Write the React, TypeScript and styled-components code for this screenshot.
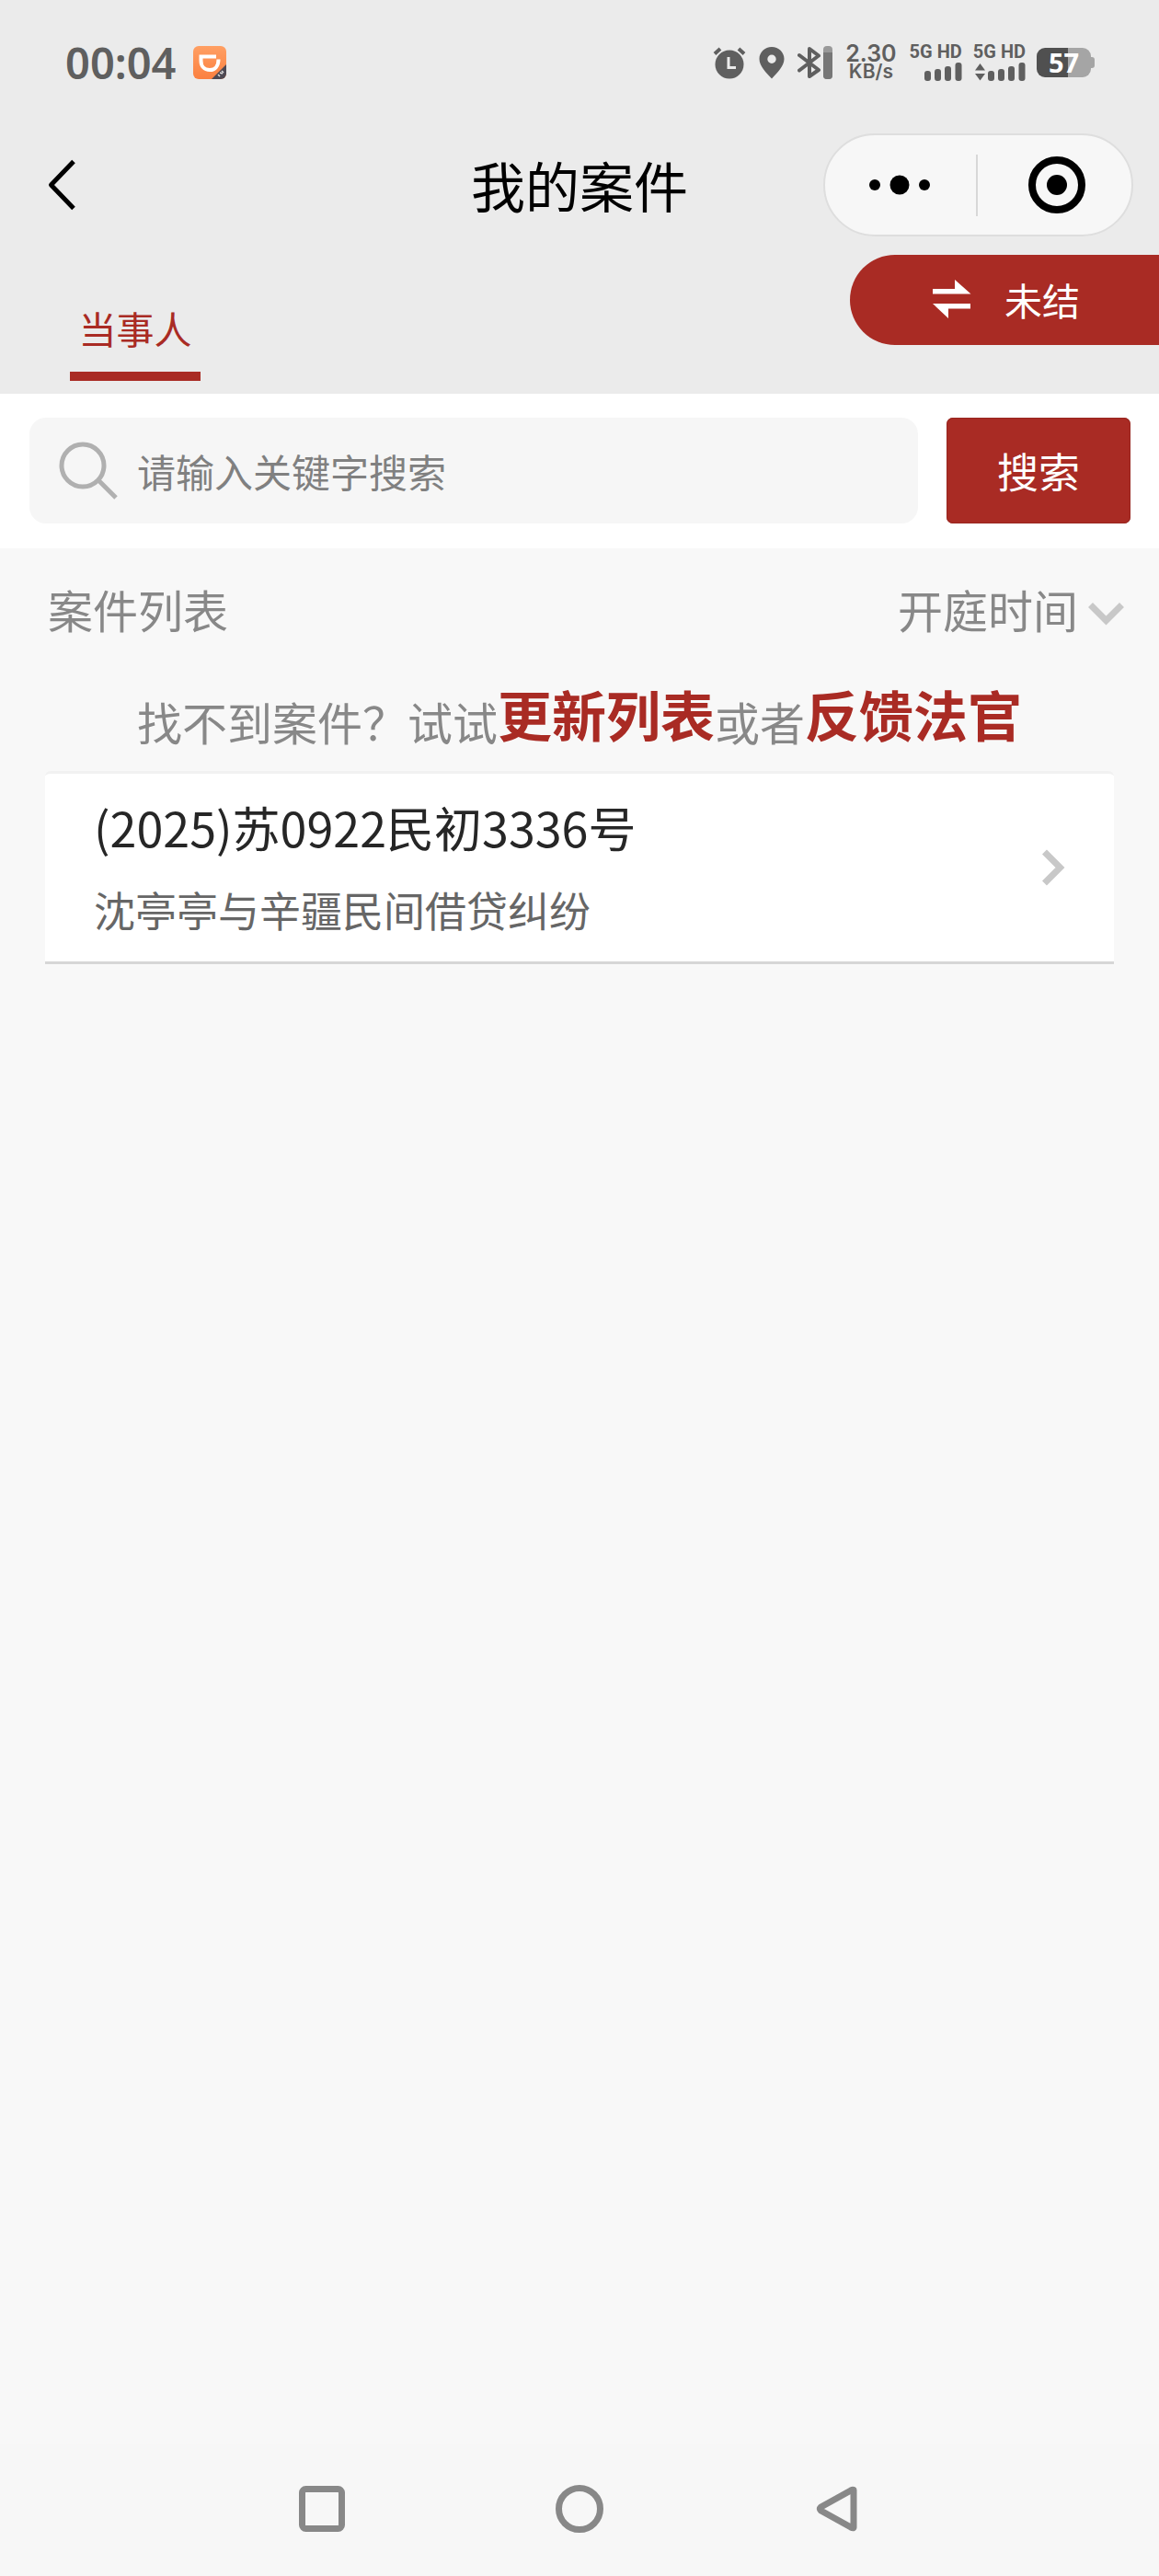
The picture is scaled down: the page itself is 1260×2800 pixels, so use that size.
import React, { useState } from "react";
import styled, { createGlobalStyle } from "styled-components";

const red = "#a92b24";
const statusGray = "#5f5f5f";

const GlobalStyle = createGlobalStyle`
  * { box-sizing: border-box; }
  body {
    margin: 0;
    background: #f8f8f8;
    font-family: "Noto Sans CJK SC", "Noto Sans", sans-serif;
  }
  button, input, select { font-family: inherit; margin: 0; }
  button { border: 0; padding: 0; background: none; cursor: pointer; }
  svg { display: block; flex: none; }
`;

const Page = styled.div`
  min-height: 100vh;
  display: flex;
  flex-direction: column;
`;

const Header = styled.header`
  background: #ebebeb;
`;

const StatusBar = styled.div`
  height: 136px;
  padding: 0 70px 0 71px;
  display: flex;
  align-items: center;
  justify-content: space-between;
  color: ${statusGray};
  font-family: "Noto Sans", sans-serif;
`;

const StatusGroup = styled.div<{ $gap: number }>`
  display: flex;
  align-items: center;
  gap: ${(p) => p.$gap}px;
`;

const Clock = styled.time`
  font-size: 47px;
  line-height: 48px;
  font-weight: 600;
`;

const Speed = styled.div`
  display: flex;
  flex-direction: column;
  align-items: center;
  font-family: Inter, sans-serif;
  font-weight: 600;
`;

const SpeedValue = styled.span`
  font-size: 25px;
  line-height: 20px;
`;

const SpeedUnit = styled.span`
  font-size: 21px;
  line-height: 20px;
`;

const Signal = styled.div`
  display: flex;
  flex-direction: column;
  align-items: flex-end;
  gap: 4px;
  font-family: Roboto, sans-serif;
  font-size: 20px;
  line-height: 16px;
  font-weight: 700;
`;

const Battery = styled.div`
  display: flex;
  align-items: center;
`;

const BatteryBody = styled.span`
  width: 59px;
  height: 32px;
  border-radius: 9px;
  background: linear-gradient(to right, #505050 57%, #a5a5a5 57%);
  color: #fff;
  font-size: 29px;
  line-height: 32px;
  font-weight: 700;
  text-align: center;
`;

const BatteryTip = styled.span`
  width: 4px;
  height: 12px;
  border-radius: 0 3px 3px 0;
  background: #a5a5a5;
`;

const NavBar = styled.div`
  padding: 9px 28px 0 48px;
  display: grid;
  grid-template-columns: 1fr auto 1fr;
  align-items: center;
`;

const BackButton = styled.button`
  justify-self: start;
`;

const Title = styled.h1`
  margin: 0 20px 0 0;
  font-size: 59px;
  line-height: 80px;
  font-weight: 400;
  color: #000;
`;

const Capsule = styled.div`
  justify-self: end;
  width: 337px;
  height: 112px;
  border: 2px solid #dedede;
  border-radius: 56px;
  background: #f7f7f7;
  display: flex;
  align-items: center;
`;

const CapsuleButton = styled.button`
  flex: 1;
  height: 100%;
  padding-right: 2px;
  display: flex;
  align-items: center;
  justify-content: center;
  &:last-child { padding: 0 0 0 6px; }
`;

const CapsuleDivider = styled.span`
  width: 2px;
  height: 67px;
  background: #d8d8d8;
`;

const TabRow = styled.div`
  height: 171px;
  padding: 20px 0 14px 76px;
  display: flex;
  justify-content: space-between;
`;

const Tab = styled.button`
  align-self: flex-end;
  width: 142px;
  border-bottom: 10px solid ${red};
  padding-bottom: 18px;
  color: ${red};
  font-size: 41px;
  line-height: 60px;
`;

const FilterPill = styled.button`
  width: 336px;
  height: 98px;
  border-radius: 49px 0 0 49px;
  padding: 0 0 2px 90px;
  background: ${red};
  color: #fff;
  font-size: 41px;
  line-height: 60px;
  display: flex;
  align-items: center;
  gap: 36px;
`;

const SearchForm = styled.form`
  padding: 26px 31px 27px 32px;
  background: #fff;
  display: flex;
  gap: 31px;
`;

const SearchField = styled.label`
  flex: 1;
  height: 115px;
  padding-left: 32px;
  border-radius: 18px;
  background: #f6f6f6;
  display: flex;
  align-items: center;
  gap: 21px;
`;

const SearchInput = styled.input`
  flex: 1;
  min-width: 0;
  border: 0;
  padding: 0;
  outline: 0;
  background: none;
  color: #333;
  font-size: 42px;
  line-height: 60px;
  &::placeholder { color: #808080; opacity: 1; }
`;

const SearchButton = styled.button`
  width: 200px;
  height: 115px;
  border-radius: 7px;
  background: ${red};
  box-shadow: inset 0 0 0 1px #98261f;
  color: #fff;
  font-size: 45px;
  line-height: 60px;
`;

const ListHeader = styled.div`
  padding: 30px 38px 0 52px;
  display: flex;
  align-items: center;
  justify-content: space-between;
  color: #888;
  font-size: 49px;
  line-height: 72px;
`;

const ListTitle = styled.h2`
  margin: 0;
  font: inherit;
`;

const SortLabel = styled.label`
  display: flex;
  align-items: center;
  gap: 10px;
  svg { margin-top: 10px; }
`;

const SortSelect = styled.select`
  appearance: none;
  border: 0;
  padding: 0;
  background: none;
  color: inherit;
  font-size: 49px;
  line-height: 72px;
`;

const Hint = styled.p`
  margin: 0;
  padding: 34px 0 18px;
  display: flex;
  justify-content: center;
  align-items: flex-end;
  color: #888;
  font-size: 49px;
  line-height: 72px;
`;

const HintAction = styled.button`
  color: ${red};
  font-size: 59px;
  line-height: 88px;
  font-weight: 700;
`;

const CaseList = styled.ul`
  list-style: none;
  margin: 0 49px;
  padding: 0;
`;

const CaseCard = styled.a`
  display: flex;
  align-items: center;
  justify-content: space-between;
  padding: 20px 53px;
  border-top: 3px solid #f1f1f1;
  border-bottom: 3px solid #d6d6d6;
  border-radius: 6px 6px 0 0;
  background: #fff;
  text-decoration: none;
`;

const CaseText = styled.div`
  display: flex;
  flex-direction: column;
  gap: 16px;
`;

const CaseNumber = styled.span`
  color: #262626;
  font-size: 52px;
  line-height: 76px;
`;

const CaseName = styled.span`
  color: #666;
  font-size: 45px;
  line-height: 72px;
`;

const SystemNav = styled.nav`
  margin-top: auto;
  height: 144px;
  padding: 0 210px 2px;
  background: #f7f7f7;
  display: flex;
  align-items: center;
  justify-content: space-around;
`;

const SystemButton = styled.button`
  flex: 1;
  display: flex;
  justify-content: center;
`;

const RideAppIcon = () => (
  <svg width="36" height="36" viewBox="0 0 36 36">
    <defs>
      <linearGradient id="ride" x1="0" y1="0" x2="0" y2="1">
        <stop offset="0" stopColor="#ff9f63" />
        <stop offset="1" stopColor="#fb8040" />
      </linearGradient>
      <clipPath id="rideClip"><rect width="36" height="36" rx="6" /></clipPath>
    </defs>
    <g clipPath="url(#rideClip)">
      <rect width="36" height="36" fill="url(#ride)" />
      <path d="M20 36 36 20V36Z" fill="#4d4852" />
      <path d="M25 11.500H8.500V16C8.500 22 12 26 18 26C24 26 27.500 21.500 27.500 14.500" fill="none" stroke="#fff" strokeWidth="4" />
      <path d="M27 31l2 2M29 29l3 1M31 27l2 2" stroke="#ddd" strokeWidth="1.500" />
    </g>
  </svg>
);

const AlarmIcon = () => (
  <svg width="36" height="36" viewBox="0 0 36 36">
    <circle cx="18" cy="20" r="15.500" fill={statusGray} />
    <path d="M2 8.500 8 3M34 8.500 28 3" stroke={statusGray} strokeWidth="4" />
    <path d="M17 12V23.500H25" fill="none" stroke="#ebebeb" strokeWidth="3" />
  </svg>
);

const PinIcon = () => (
  <svg width="28" height="36" viewBox="0 0 28 36">
    <path fillRule="evenodd" fill={statusGray} d="M14 1C6.500 1 .5 6.700.5 14C.5 22 8 29 14 35.500C20 29 27.500 22 27.500 14C27.500 6.700 21.500 1 14 1ZM14 9.500a4.700 4.700 0 1 1 0 9.400a4.700 4.700 0 0 1 0-9.400Z" />
  </svg>
);

const BluetoothIcon = () => (
  <svg width="38" height="36" viewBox="0 0 38 36">
    <path d="M2 10 23 26 13 33V3L23 10.500 2 26.500" fill="none" stroke={statusGray} strokeWidth="4" strokeLinejoin="round" strokeLinecap="round" />
    <rect x="28" y="0" width="10" height="36" rx="4" fill="#999" />
    <path d="M28 7h10v25a4 4 0 0 1-4 4h-2a4 4 0 0 1-4-4Z" fill="#777" />
  </svg>
);

const SignalBars = ({ traffic = false }: { traffic?: boolean }) => (
  <svg width="55" height="20" viewBox="0 0 55 20" fill={statusGray}>
    {traffic && <path d="M0 8.500 5.500 1 11 8.500ZM0 12 5.500 19.500 11 12Z" />}
    <rect x="14" y="9" width="7" height="11" rx="3" />
    <rect x="25" y="7" width="7" height="13" rx="3" />
    <rect x="36" y="4" width="7" height="16" rx="3" />
    <rect x="47.500" y="0" width="7" height="20" rx="3" />
  </svg>
);

const BackIcon = () => (
  <svg width="40" height="60" viewBox="0 0 40 60">
    <path d="M32 4.500 7.500 30 32 55.500" fill="none" stroke="#000" strokeWidth="5" strokeLinejoin="round" />
  </svg>
);

const MoreIcon = () => (
  <svg width="66" height="22" viewBox="0 0 66 22">
    <circle cx="6" cy="11" r="6" />
    <circle cx="33" cy="11" r="10.500" />
    <circle cx="60" cy="11" r="6" />
  </svg>
);

const CloseIcon = () => (
  <svg width="62" height="62" viewBox="0 0 62 62">
    <circle cx="31" cy="31" r="27" fill="none" stroke="#000" strokeWidth="8" />
    <circle cx="31" cy="31" r="11" />
  </svg>
);

const SwapIcon = () => (
  <svg width="42" height="42" viewBox="0 0 42 42" fill="#fff">
    <path d="M0 15.500V10H24V0L41.500 15.500ZM41 26V31.500H17V42L0 26Z" />
  </svg>
);

const SearchIcon = () => (
  <svg width="64" height="64" viewBox="0 0 64 64" fill="none" stroke="#b0b0b0" strokeWidth="5">
    <circle cx="26" cy="26" r="23" />
    <path d="M43 42 62 61" />
  </svg>
);

const DownIcon = () => (
  <svg width="39" height="26" viewBox="0 0 39 26">
    <path d="M2.500 3.500 19.500 20.500 36.500 3.500" fill="none" stroke="#c8c8c8" strokeWidth="7" />
  </svg>
);

const RightIcon = () => (
  <svg width="26" height="40" viewBox="0 0 26 40">
    <path d="M3.500 3 20.500 20 3.500 37" fill="none" stroke="#c8c8c8" strokeWidth="7" />
  </svg>
);

const cases = [{ number: "(2025)苏0922民初3336号", name: "沈亭亭与辛疆民间借贷纠纷" }];

export default function App() {
  const [keyword, setKeyword] = useState("");
  return (
    <Page>
      <GlobalStyle />
      <Header>
        <StatusBar>
          <StatusGroup $gap={18}>
            <Clock>00:04</Clock>
            <RideAppIcon />
          </StatusGroup>
          <StatusGroup $gap={14}>
            <AlarmIcon />
            <PinIcon />
            <BluetoothIcon />
            <Speed>
              <SpeedValue>2.30</SpeedValue>
              <SpeedUnit>KB/s</SpeedUnit>
            </Speed>
            <StatusGroup $gap={12}>
              <Signal>5G HD<SignalBars /></Signal>
              <Signal>5G HD<SignalBars traffic /></Signal>
              <Battery>
                <BatteryBody>57</BatteryBody>
                <BatteryTip />
              </Battery>
            </StatusGroup>
          </StatusGroup>
        </StatusBar>
        <NavBar>
          <BackButton type="button" aria-label="返回"><BackIcon /></BackButton>
          <Title>我的案件</Title>
          <Capsule>
            <CapsuleButton type="button" aria-label="更多"><MoreIcon /></CapsuleButton>
            <CapsuleDivider />
            <CapsuleButton type="button" aria-label="关闭"><CloseIcon /></CapsuleButton>
          </Capsule>
        </NavBar>
        <TabRow>
          <Tab type="button">当事人</Tab>
          <FilterPill type="button"><SwapIcon />未结</FilterPill>
        </TabRow>
      </Header>
      <main>
        <SearchForm onSubmit={(e) => e.preventDefault()}>
          <SearchField>
            <SearchIcon />
            <SearchInput
              type="text"
              aria-label="关键字"
              placeholder="请输入关键字搜索"
              value={keyword}
              onChange={(e) => setKeyword(e.target.value)}
            />
          </SearchField>
          <SearchButton type="submit">搜索</SearchButton>
        </SearchForm>
        <ListHeader>
          <ListTitle>案件列表</ListTitle>
          <SortLabel>
            <SortSelect aria-label="排序">
              <option>开庭时间</option>
            </SortSelect>
            <DownIcon />
          </SortLabel>
        </ListHeader>
        <Hint>
          找不到案件？试试
          <HintAction type="button">更新列表</HintAction>
          或者
          <HintAction type="button">反馈法官</HintAction>
        </Hint>
        <CaseList>
          {cases.map((c) => (
            <li key={c.number}>
              <CaseCard href="#case">
                <CaseText>
                  <CaseNumber>{c.number}</CaseNumber>
                  <CaseName>{c.name}</CaseName>
                </CaseText>
                <RightIcon />
              </CaseCard>
            </li>
          ))}
        </CaseList>
      </main>
      <SystemNav>
        <SystemButton type="button" aria-label="最近任务">
          <svg width="50" height="50" viewBox="0 0 50 50" fill="none" stroke="#888" strokeWidth="7">
            <rect x="3.500" y="3.500" width="43" height="43" rx="4" />
          </svg>
        </SystemButton>
        <SystemButton type="button" aria-label="主屏幕">
          <svg width="52" height="52" viewBox="0 0 52 52" fill="none" stroke="#888" strokeWidth="7">
            <circle cx="26" cy="26" r="22.500" />
          </svg>
        </SystemButton>
        <SystemButton type="button" aria-label="返回上一级">
          <svg width="46" height="50" viewBox="0 0 46 50" fill="none" stroke="#888" strokeWidth="7" strokeLinejoin="round">
            <path d="M41 4.500V45.500Q40 46 38 45L5.500 27Q3.500 25 5.500 23L38 5Q40 4 41 4.500Z" />
          </svg>
        </SystemButton>
      </SystemNav>
    </Page>
  );
}
